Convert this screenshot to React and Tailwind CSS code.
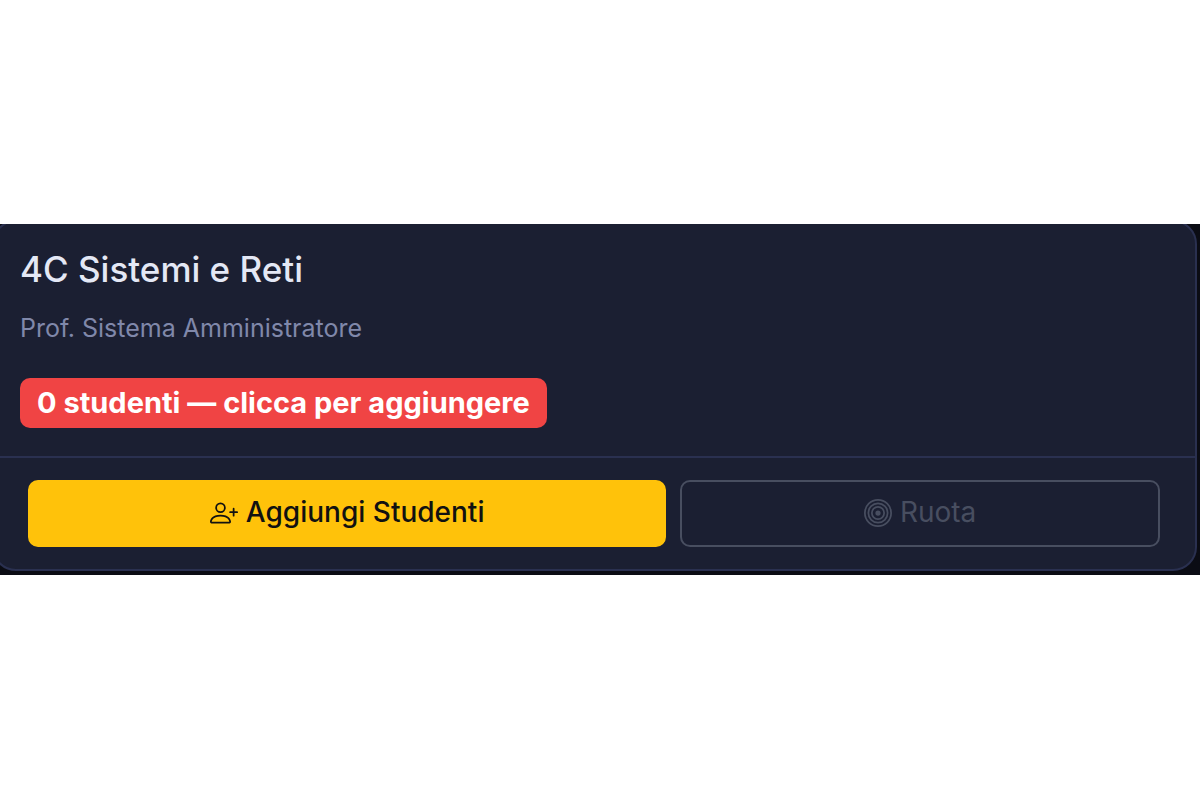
import { BsBullseye, BsPersonPlus } from "react-icons/bs";

/**
 * Componente ClassCard
 * Card di una classe con docente, numero di studenti e azioni disponibili
 */
const ClassCard = ({ title, teacher, students }) => {
  return (
    <article className="-mt-1 -ml-2 mr-[3px] mb-1 rounded-3xl border-2 border-[#2a3050] bg-[#1b1f32]">
      {/* Dati della classe */}
      <div className="px-[26px] pt-6 pb-7">
        <h2 className="text-[35px] leading-[46px] font-medium text-[#e4e8f5]">
          {title}
        </h2>
        <p className="mt-[18px] text-[25px] leading-9 text-[#8088aa]">
          {teacher}
        </p>
        <a
          href="#studenti"
          className="mt-8 inline-block rounded-[10px] bg-[#f04444] px-[17px] text-[29px] leading-[50px] font-bold text-white align-top"
        >
          {students} studenti — clicca per aggiungere
        </a>
      </div>

      {/* Azioni */}
      <div className="flex gap-[14px] border-t-2 border-[#2a3050] py-[22px] pr-[35px] pl-[34px]">
        <button
          type="button"
          className="flex flex-4 basis-0 items-center justify-center gap-2 rounded-[10px] border-2 border-[#ffc20a] bg-[#ffc20a] pb-[2px] text-[28px] leading-[61px] font-medium text-[#111111]"
        >
          <BsPersonPlus className="size-7" aria-hidden="true" />
          Aggiungi Studenti
        </button>
        <button
          type="button"
          disabled={students === 0}
          className="flex flex-3 basis-0 items-center justify-center gap-2 rounded-[10px] border-2 border-[#484e60] pb-[2px] text-[28px] leading-[61px] text-[#484e60]"
        >
          <BsBullseye className="size-7" aria-hidden="true" />
          Ruota
        </button>
      </div>
    </article>
  );
};

const App = () => {
  return (
    <main className="min-h-screen bg-white pt-56 font-['Inter','Liberation_Sans',sans-serif]">
      <section className="flow-root overflow-hidden bg-[#0b0c14]">
        <ClassCard
          title="4C Sistemi e Reti"
          teacher="Prof. Sistema Amministratore"
          students={0}
        />
      </section>
    </main>
  );
};

export default App;
